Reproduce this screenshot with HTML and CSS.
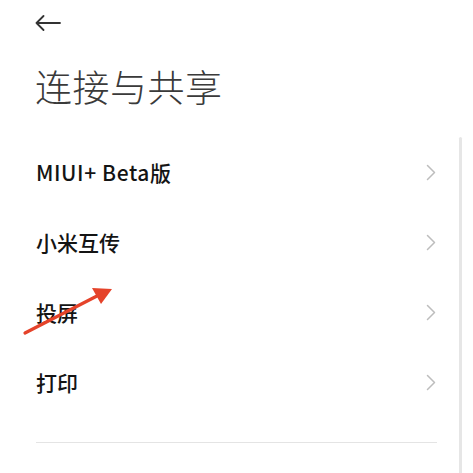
FILE: index.html
```html
<!DOCTYPE html>
<html lang="zh">
<head>
<meta charset="utf-8">
<link rel="stylesheet" href="styles.css">
</head>
<body>
<div class="page">
  <div class="topbar">
    <svg class="back" width="26" height="16" viewBox="0 0 26 16"><path d="M25 8H1.5M8.5 1L1.5 8l7 7" fill="none" stroke="#333" stroke-width="1.8" stroke-linecap="round" stroke-linejoin="round"/></svg>
  </div>
  <h1 class="title">连接与共享</h1>
  <div class="list">
    <div class="row"><span class="label"><span class="latin">MIUI+ Beta</span>版</span><svg class="chev" width="10" height="17" viewBox="0 0 10 17"><path d="M1.5 1.5l7 7-7 7" fill="none" stroke="#bdbdbd" stroke-width="1.5" stroke-linecap="round" stroke-linejoin="round"/></svg></div>
    <div class="row"><span class="label">小米互传</span><svg class="chev" width="10" height="17" viewBox="0 0 10 17"><path d="M1.5 1.5l7 7-7 7" fill="none" stroke="#bdbdbd" stroke-width="1.5" stroke-linecap="round" stroke-linejoin="round"/></svg></div>
    <div class="row"><span class="label">投屏</span><svg class="chev" width="10" height="17" viewBox="0 0 10 17"><path d="M1.5 1.5l7 7-7 7" fill="none" stroke="#bdbdbd" stroke-width="1.5" stroke-linecap="round" stroke-linejoin="round"/></svg></div>
    <div class="row"><span class="label">打印</span><svg class="chev" width="10" height="17" viewBox="0 0 10 17"><path d="M1.5 1.5l7 7-7 7" fill="none" stroke="#bdbdbd" stroke-width="1.5" stroke-linecap="round" stroke-linejoin="round"/></svg></div>
  </div>
  <div class="divider"></div>
</div>
<div class="scrollbar"></div>
<svg class="annot" width="473" height="473" viewBox="0 0 473 473"><path d="M25 333L97 296" stroke="#e5432a" stroke-width="3.2" stroke-linecap="round" fill="none"/><path d="M112 289L92 288L101 304Z" fill="#e5432a"/></svg>
</body>
</html>
```
FILE: styles.css
```css
html, body {
  margin: 0;
  padding: 0;
  background: #ffffff;
}
body {
  width: 473px;
  height: 473px;
  overflow: hidden;
  position: relative;
  font-family: "Noto Sans CJK SC", "Noto Sans", sans-serif;
}
.page {
  padding: 0 36px 0 35px;
}
.topbar {
  height: 46px;
  display: flex;
  align-items: center;
}
.back {
  display: block;
}
.title {
  margin: 0;
  font-size: 37px;
  font-weight: 300;
  line-height: 80px;
  color: #3a3a3a;
  letter-spacing: 0.5px;
}
.list {
  margin-top: 11px;
}
.row {
  height: 70px;
  display: flex;
  align-items: center;
  justify-content: space-between;
  padding-left: 1px;
}
.label {
  font-size: 21px;
  font-weight: 500;
  color: #141414;
}
.latin {
  letter-spacing: 0.6px;
}
.chev {
  display: block;
  margin-right: 1px;
}
.divider {
  margin-top: 25px;
  margin-left: 1px;
  height: 1px;
  background: #e4e4e4;
}
.scrollbar {
  position: absolute;
  left: 459px;
  top: 137px;
  width: 3px;
  bottom: 0;
  background: #e6e6e6;
  border-radius: 2px 2px 0 0;
}
.annot {
  position: absolute;
  left: 0;
  top: 0;
  pointer-events: none;
}
```
